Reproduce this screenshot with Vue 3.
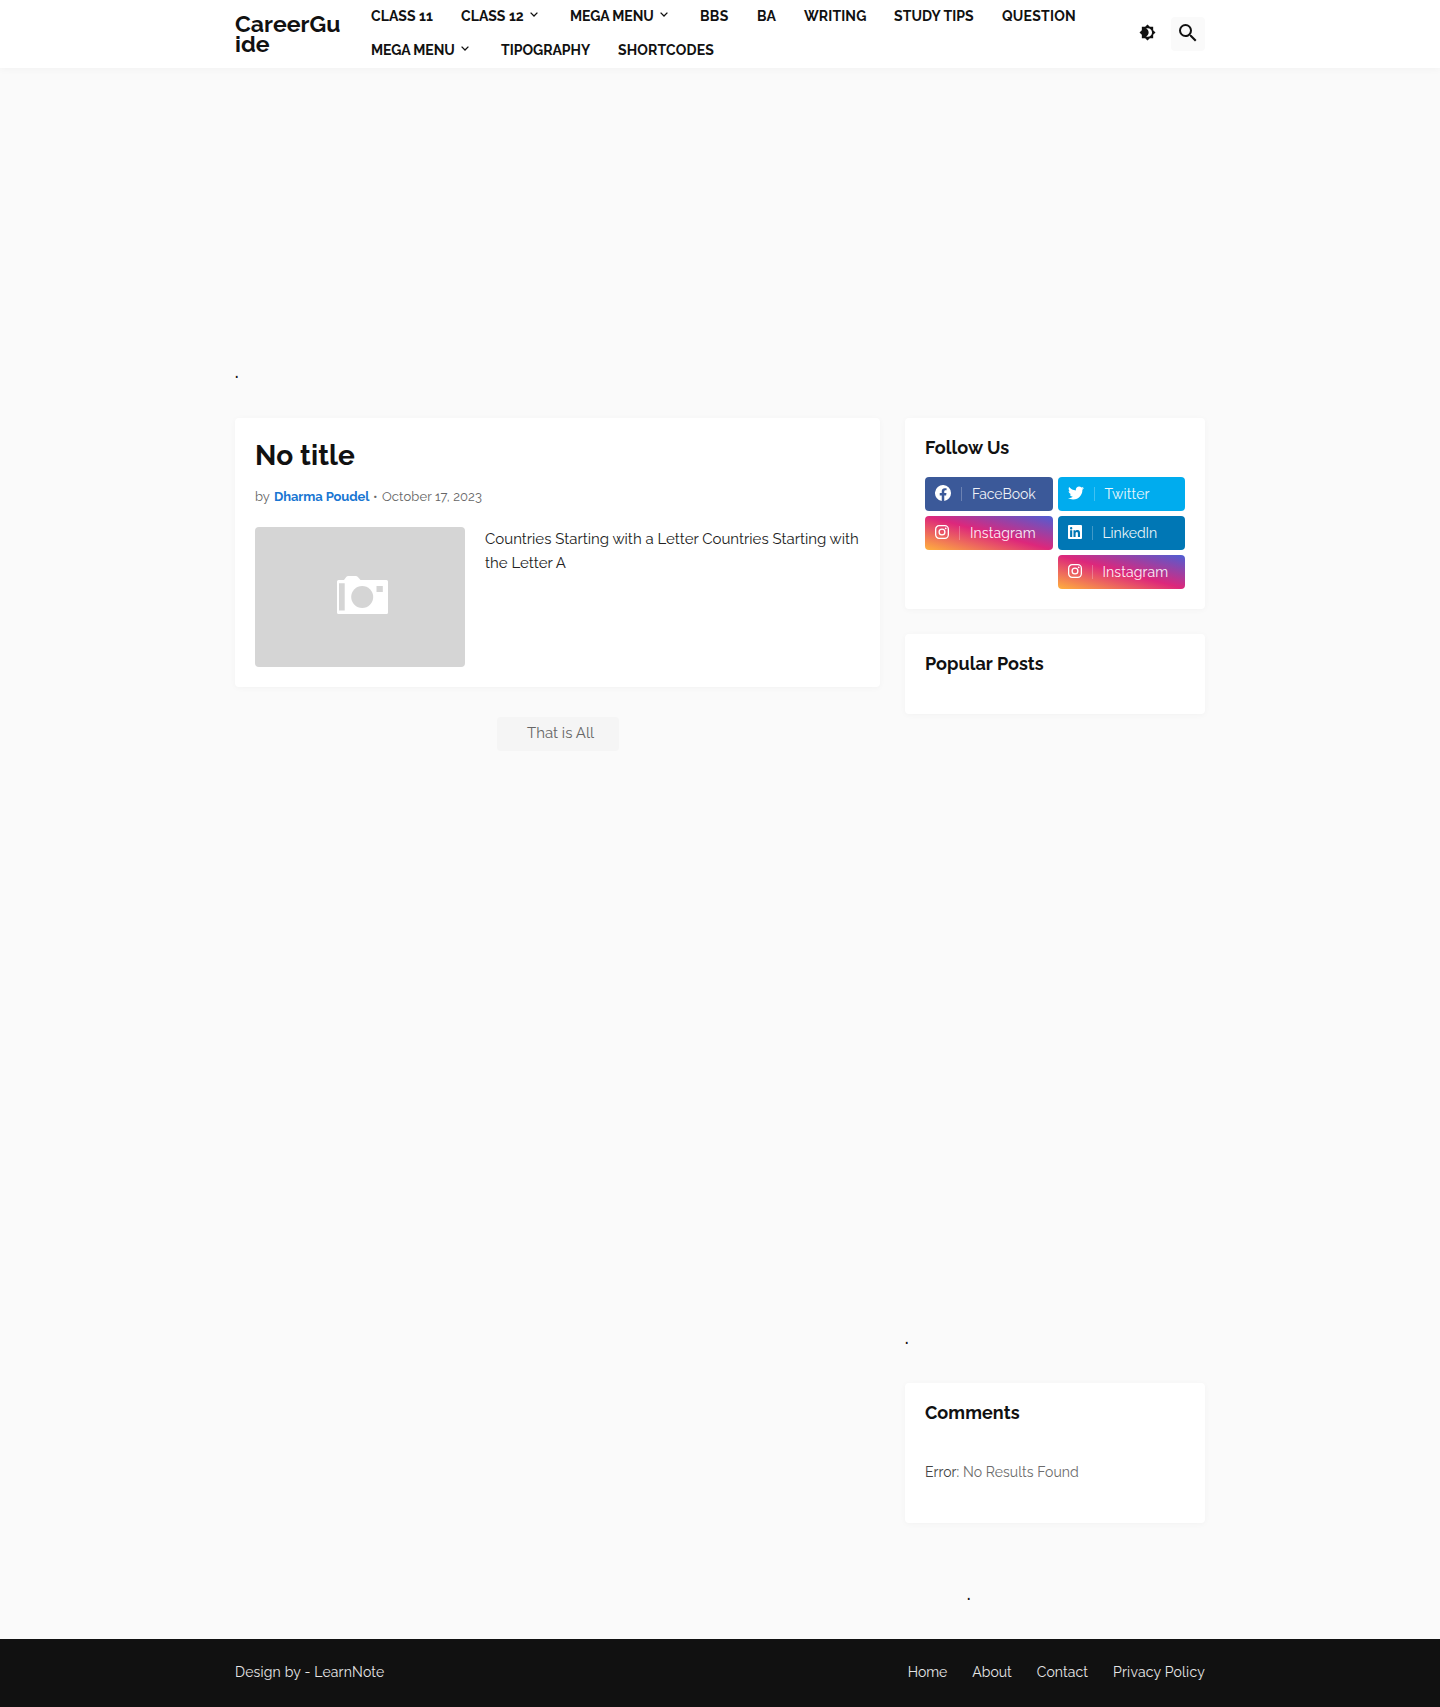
<script setup>
const menuRows = [
  [
    { label: 'CLASS 11', w: 90, ls: 0.08 },
    { label: 'CLASS 12', w: 109, ls: 0.05, drop: true },
    { label: 'MEGA MENU', w: 130, ls: -0.1, drop: true },
    { label: 'BBS', w: 57, ls: 0.35 },
    { label: 'BA', w: 47, ls: 0.1 },
    { label: 'WRITING', w: 90, ls: 0.12 },
    { label: 'STUDY TIPS', w: 108, ls: 0.1 },
    { label: 'QUESTION', w: 76, ls: 0.24 },
  ],
  [
    { label: 'MEGA MENU', w: 130, ls: -0.1, drop: true },
    { label: 'TIPOGRAPHY', w: 117, ls: 0 },
    { label: 'SHORTCODES', w: 100, ls: 0.17 },
  ],
]

const socialColumns = [
  [
    { name: 'FaceBook', kind: 'facebook', ls: -0.08 },
    { name: 'Instagram', kind: 'instagram', ls: 0.12 },
  ],
  [
    { name: 'Twitter', kind: 'twitter', ls: 0.12 },
    { name: 'LinkedIn', kind: 'linkedin', ls: -0.05 },
    { name: 'Instagram', kind: 'instagram', ls: 0.12 },
  ],
]

const footerLinks = [
  { label: 'Home', ls: 0 },
  { label: 'About', ls: 0 },
  { label: 'Contact', ls: 0.08 },
  { label: 'Privacy Policy', ls: 0.22 },
]
</script>

<template>
  <div class="page">
    <header class="header">
      <div class="wrap header-row">
        <a class="logo">CareerGu<br />ide</a>
        <nav class="menu">
          <div v-for="(row, i) in menuRows" :key="i" class="menu-row">
            <a v-for="item in row" :key="item.label" class="menu-item" :style="{ width: item.w + 'px' }">
              <span :style="{ letterSpacing: item.ls + 'px' }">{{ item.label }}</span>
              <svg v-if="item.drop" class="chevron" width="8" height="5" viewBox="0 0 8 5"><path d="M.6.6 4 4 7.4.6" fill="none" stroke="#111" stroke-width="1.3" /></svg>
            </a>
          </div>
        </nav>
        <a class="theme">
          <svg width="17" height="17" viewBox="0 0 24 24"><path fill="#111" d="M20 15.31 23.31 12 20 8.69V4h-4.69L12 .69 8.69 4H4v4.69L.69 12 4 15.31V20h4.69L12 23.31 15.31 20H20v-4.69ZM12.4 18c-.7 0-1.6-.2-2.3-.5 2.1-1 3.5-3.1 3.5-5.5s-1.4-4.5-3.5-5.5c.7-.3 1.6-.5 2.300-.5 3.300 0 6 2.700 6 6s-2.700 6-6 6Z" /></svg>
        </a>
        <a class="search">
          <svg width="24" height="24" viewBox="0 0 24 24"><path fill="#111" d="M15.500 14h-.79l-.28-.27A6.471 6.471 0 0 0 16 9.500 6.500 6.500 0 1 0 9.500 16c1.610 0 3.090-.59 4.230-1.570l.27.28v.79l5 4.990L20.490 19l-4.990-5Zm-6 0C7.010 14 5 11.990 5 9.500S7.010 5 9.500 5 14 7.010 14 9.500 11.990 14 9.500 14Z" /></svg>
        </a>
      </div>
    </header>

    <div class="wrap ad-top">.</div>

    <div class="wrap columns">
      <main class="main">
        <article class="card post">
          <h1>No title</h1>
          <div class="meta">
            <span class="by">by</span><a class="author">Dharma Poudel</a><span class="sep">•</span><span class="date">October 17, 2023</span>
          </div>
          <div class="post-body">
            <div class="thumb">
              <svg width="51" height="38" viewBox="0 0 51 38"><path fill="#fff" d="M1.500 4H7l2.200-3Q10 0 11.300 0h7.400q1.300 0 2.200 1L23.500 4h26Q51 4 51 5.500v31q0 1.500-1.500 1.500h-48Q0 38 0 36.500v-31Q0 4 1.500 4Z" /><path fill="#d5d5d5" d="M2 7.200h5.700v27.300H2zM39.500 10h6.300v6h-6.300z" /><circle cx="25.200" cy="21" r="11" fill="#d5d5d5" /></svg>
            </div>
            <p class="excerpt">Countries Starting with a Letter Countries Starting with the Letter A</p>
          </div>
        </article>
        <a class="load-more">That is All</a>
      </main>

      <aside class="side">
        <section class="card follow">
          <h3>Follow Us</h3>
          <div class="social">
            <div v-for="(col, i) in socialColumns" :key="i" class="social-col">
              <a v-for="s in col" :key="s.name" class="btn" :class="s.kind">
                <svg v-if="s.kind === 'facebook'" width="16" height="16" viewBox="0 0 16 16"><path fill="#fff" d="M16 8.050A8 8 0 1 0 6.750 16v-5.620H4.720V8.050h2.030V6.270c0-2.020 1.200-3.130 3.020-3.130.88 0 1.790.16 1.790.16v1.980h-1.010c-.99 0-1.300.62-1.300 1.260v1.510h2.220l-.35 2.330H9.250V16A8 8 0 0 0 16 8.050Z" /></svg>
                <svg v-else-if="s.kind === 'twitter'" width="16" height="16" viewBox="0 0 512 512"><path fill="#fff" d="M459.370 151.716c.325 4.548.325 9.097.325 13.645 0 138.720-105.583 298.558-298.558 298.558-59.452 0-114.680-17.219-161.137-47.106 8.447.974 16.568 1.299 25.340 1.299 49.055 0 94.213-16.568 130.274-44.832-46.132-.975-84.792-31.188-98.112-72.772 6.498.974 12.995 1.624 19.818 1.624 9.421 0 18.843-1.300 27.614-3.573-48.081-9.747-84.143-51.980-84.143-102.985v-1.299c13.969 7.797 30.214 12.670 47.431 13.319-28.264-18.843-46.781-51.005-46.781-87.391 0-19.492 5.197-37.360 14.294-52.954 51.655 63.675 129.300 105.258 216.365 109.807-1.624-7.797-2.599-15.918-2.599-24.040 0-57.828 46.782-104.934 104.934-104.934 30.213 0 57.502 12.670 76.670 33.137 23.715-4.548 46.456-13.320 66.599-25.340-7.798 24.366-24.366 44.833-46.132 57.827 21.117-2.273 41.584-8.122 60.426-16.243-14.292 20.791-32.161 39.308-52.628 54.253z" /></svg>
                <svg v-else-if="s.kind === 'linkedin'" width="14" height="14" viewBox="0 0 14 14"><path fill="#fff" fill-rule="evenodd" d="M1 0h12q1 0 1 1v12q0 1-1 1H1q-1 0-1-1V1Q0 0 1 0Zm1.100 5.300v6.700h2.100V5.300H2.100Zm1.050-3.300a1.200 1.200 0 1 0 0 2.400 1.200 1.200 0 0 0 0-2.400ZM5.500 5.300V12h2.100V8.700c0-.9.2-1.750 1.250-1.750S9.900 7.900 9.900 8.750V12H12V8.300c0-1.800-.4-3.200-2.500-3.200-1 0-1.700.55-2 1.100V5.300H5.500Z" /></svg>
                <svg v-else width="14" height="14" viewBox="0 0 14 14"><g fill="none" stroke="#fff" stroke-width="1.300"><rect x=".65" y=".65" width="12.700" height="12.700" rx="3.500" /><circle cx="7" cy="7" r="2.900" /></g><circle cx="10.700" cy="3.300" r=".9" fill="#fff" /></svg>
                <i class="bar"></i>
                <span :style="{ letterSpacing: s.ls + 'px' }">{{ s.name }}</span>
              </a>
            </div>
          </div>
        </section>
        <section class="card popular"><h3>Popular Posts</h3></section>
        <div class="ad-side">.</div>
        <section class="card comments">
          <h3>Comments</h3>
          <p class="error"><b>Error:</b> No Results Found</p>
        </section>
        <div class="ad-end">.</div>
      </aside>
    </div>

    <footer class="footer">
      <div class="wrap footer-row">
        <span class="credit">Design by - LearnNote</span>
        <nav class="links">
          <a v-for="l in footerLinks" :key="l.label" :style="{ letterSpacing: l.ls + 'px' }">{{ l.label }}</a>
        </nav>
      </div>
    </footer>
  </div>
</template>

<style scoped>
* { box-sizing: border-box; }
.page {
  height: 1707px;
  display: flex;
  flex-direction: column;
  background: #fafafa;
  color: #111;
  font: 400 14px/1.5 Raleway, Lato, sans-serif;
  white-space: nowrap;
}
svg { display: block; flex: none; }
.wrap { width: 970px; margin: 0 auto; flex: none; }
.header { height: 68px; flex: none; background: #fff; box-shadow: 0 1px 8px rgba(0, 0, 0, .04); }
.header-row { display: flex; height: 68px; align-items: center; }
.logo { width: 136px; flex: none; font-weight: 700; font-size: 23px; line-height: 20px; letter-spacing: .06px; }
.menu { flex: 1; height: 68px; margin-top: -2px; }
.menu-row { display: flex; height: 34px; }
.menu-item { display: flex; flex: none; align-items: center; font-weight: 700; line-height: 34px; }
.chevron { margin: -4px 0 0 6px; }
.theme { width: 36px; padding-left: 3.5px; flex: none; margin-top: -3px; }
.search { width: 34px; height: 34px; flex: none; padding: 4px 0 0 5px; background: #fafafa; border-radius: 4px; }
.ad-top { height: 350px; padding-top: 293px; font-size: 15px; line-height: 24px; font-weight: 700; }
.columns { display: flex; justify-content: space-between; height: 1221px; }
.main { width: 645px; }
.side { width: 300px; }
.card { background: #fff; border-radius: 4px; box-shadow: 0 1px 6px rgba(0, 0, 0, .035); padding: 0 20px; }
.post { height: 269px; padding-top: 19px; }
h1 { margin: 0; font-size: 28px; line-height: 38px; font-weight: 700; letter-spacing: .1px; }
.meta { display: flex; margin-top: 12px; font-size: 13px; line-height: 20px; color: #666; }
.by { width: 19px; }
.author { width: 99px; color: #1976d2; font-weight: 700; letter-spacing: -.1px; }
.sep { width: 9px; font-size: 13px; }
.date { letter-spacing: .1px; }
.post-body { display: flex; margin-top: 20px; }
.thumb { width: 210px; height: 140px; flex: none; display: flex; align-items: center; justify-content: center; padding: 0 0 4px 5px; background: #d5d5d5; border-radius: 4px; }
.excerpt { margin: 0 0 0 20px; font-size: 15px; line-height: 24px; color: #222; white-space: normal; }
.load-more { display: block; width: 122px; height: 34px; margin: 30px 0 0 262px; padding-left: 30px; background: #f5f5f5; border-radius: 4px; font-size: 15px; line-height: 32px; color: #666; }
h3 { margin: 0; font-size: 18px; line-height: 24px; font-weight: 700; letter-spacing: .06px; }
.follow { height: 191px; padding-top: 18px; }
.social { display: flex; gap: 5px; margin-top: 17px; }
.social-col { flex: 1; display: flex; flex-direction: column; gap: 5px; }
.btn { display: flex; height: 34px; padding: 0 10px; border-radius: 4px; color: #fff; line-height: 35px; }
.btn svg { margin-top: 9px; }
.btn.facebook svg { margin-top: 8px; }
.btn.twitter svg { margin-top: 8px; }
.bar { width: 1px; height: 14px; margin: 10px 10px 0; background: rgba(255, 255, 255, .25); }
.btn span { opacity: .92; }
.facebook { background: #3b5999; }
.twitter { background: #00acee; }
.linkedin { background: #0077b5; }
.instagram { background: linear-gradient(15deg, #ffb13d, #dd277b, #4d5ed4); }
.popular { height: 80px; margin-top: 25px; padding-top: 18px; }
.ad-side { height: 669px; padding-top: 613px; font-size: 15px; line-height: 24px; font-weight: 700; }
.comments { height: 140px; padding-top: 18px; }
.error { margin: 35px 0 0; line-height: 24px; letter-spacing: .06px; color: #6c6c6c; }
.error b { font-weight: 400; color: #444; }
.ad-end { padding: 60px 0 0 62px; font-size: 15px; line-height: 24px; font-weight: 700; }
.footer { height: 68px; flex: none; background: #111; color: #e6e6e6; }
.footer-row { display: flex; justify-content: space-between; line-height: 67px; }
.credit { letter-spacing: .18px; }
.links { display: flex; gap: 25px; }
</style>

<style>
body { margin: 0; background: #fafafa; }
</style>
